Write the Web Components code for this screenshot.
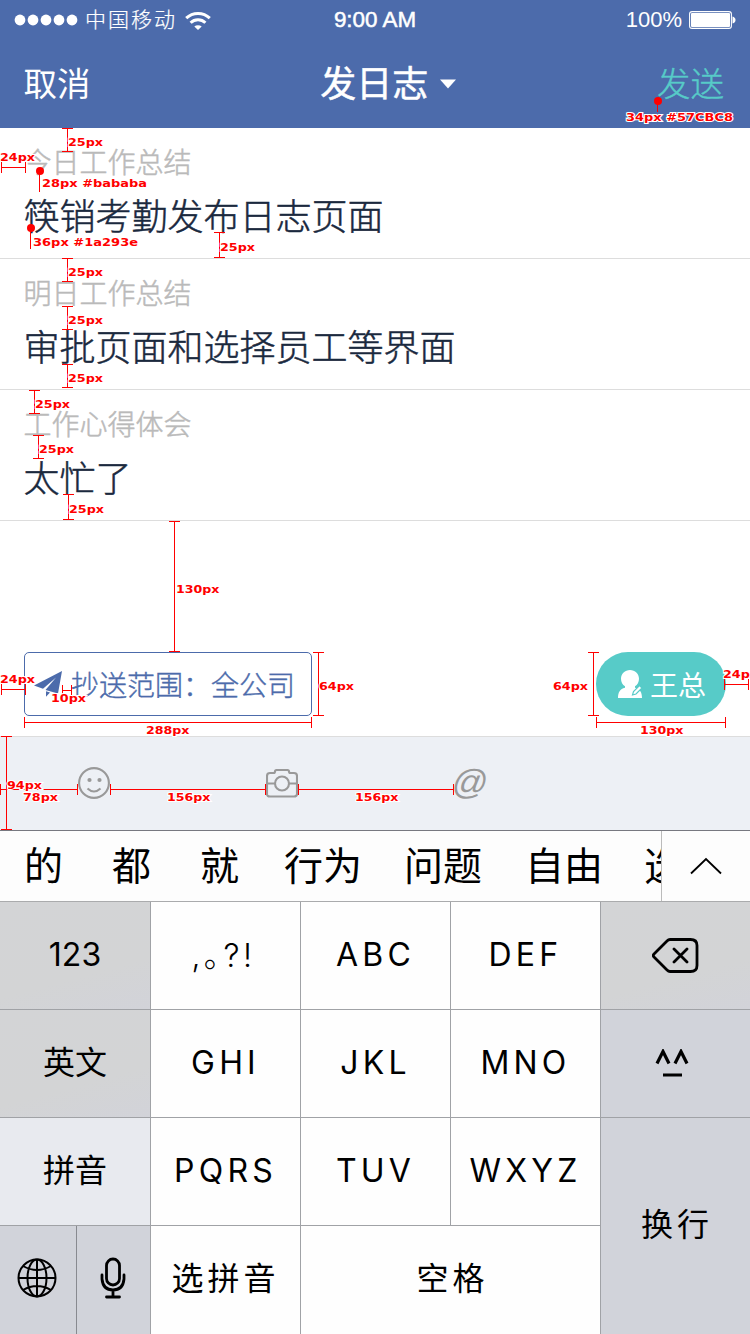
<!DOCTYPE html>
<html lang="zh-CN">
<head>
<meta charset="utf-8">
<title>发日志</title>
<style>
html,body{margin:0;padding:0}
body{width:750px;height:1334px;overflow:hidden;background:#fff;font-family:"Noto Sans CJK SC","Liberation Sans",sans-serif}
</style>
</head>
<body>
<log-screen></log-screen>
<script>
function define(name, html, init) {
  const tpl = document.createElement('template');
  tpl.innerHTML = html;
  customElements.define(name, class extends HTMLElement {
    constructor() {
      super();
      this.attachShadow({ mode: 'open' }).appendChild(tpl.content.cloneNode(true));
    }
    connectedCallback() { if (init) init(this, this.shadowRoot); }
  });
}

define('status-bar', `
<style>
:host{display:grid;grid-template-columns:1fr auto 1fr;align-items:center;height:40px;padding:0 14px 0 14px;color:#fff;font-size:21px;line-height:40px}
.l,.r{display:flex;align-items:center}
.r{justify-content:flex-end;gap:7px;font:22px/40px "Liberation Sans",sans-serif}
.c{font:22.400px/40px "Liberation Sans",sans-serif;-webkit-text-stroke:.5px #fff}
.n{margin:0 8px 0 6px;font-weight:300;letter-spacing:2px;line-height:36px;padding-bottom:4px;-webkit-text-stroke:.2px #fff}
svg{display:block}
</style>
<div class="l">
<svg width="65" height="12" fill="#fff"><circle cx="6" cy="6" r="5.400"/><circle cx="19" cy="6" r="5.400"/><circle cx="32" cy="6" r="5.400"/><circle cx="45" cy="6" r="5.400"/><circle cx="58" cy="6" r="5.400"/></svg>
<span class="n">中国移动</span>
<svg width="26" height="19" viewBox="0 0 26 19" fill="none" stroke="#fff" stroke-width="3"><path d="M1.200 7.200a17 17 0 0 1 23.600 0M5.600 11.800a10.600 10.600 0 0 1 14.800 0"/><path d="M9.300 15.600a5.500 5.500 0 0 1 7.400 0L13 19z" fill="#fff" stroke="none"/></svg>
</div>
<div class="c">9:00 AM</div>
<div class="r"><span>100%</span>
<svg width="47" height="18" fill="#fff"><rect x=".6" y=".6" width="41.800" height="16.800" rx="2.500" fill="none" stroke="#fff" stroke-width="1.100"/><rect x="2" y="2" width="39" height="14" rx="1"/><path d="M43.500 5.500q3 1 3 3.500t-3 3.500z"/></svg></div>`);

define('nav-bar', `
<style>
:host{display:grid;grid-template-columns:1fr auto 1fr;align-items:center;height:88px;padding:0 26px 0 23.500px;color:#fff;font-size:33.500px;line-height:84px}
span{padding-bottom:4px}
.t{display:flex;align-items:center;gap:12px;font-size:36px;font-weight:400;padding-left:29px;-webkit-text-stroke:.5px #fff}
.t span{padding-bottom:6px;line-height:82px}
.s{text-align:right;color:#57cbc8;font-weight:300;-webkit-text-stroke:.4px #57cbc8}
.x{font-weight:400}
</style>
<span class="x">取消</span>
<div class="t"><span>发日志</span><svg width="16" height="10"><path d="M0 .5h16l-8 9z" fill="#fff"/></svg></div>
<span class="s">发送</span>`);

define('log-entry', `
<style>
:host{display:flex;flex-direction:column;gap:21px;box-sizing:border-box;height:131px;padding:19px 24px 0 23.500px;border-bottom:1px solid #ddd}
.a{font-size:28px;line-height:28px;color:#bababa;font-weight:300;-webkit-text-stroke:.5px #bababa}
.b{font-size:36px;line-height:36px;color:#1a293e;font-weight:300;-webkit-text-stroke:.5px #1a293e}
</style>
<div class="a"><slot name="label"></slot></div><div class="b"><slot></slot></div>`);

define('scope-row', `
<style>
:host{display:flex;justify-content:space-between;padding:131px 24px 20px}
.p{display:flex;align-items:center;box-sizing:border-box;width:288px;height:64px;border:1px solid #4c6bab;border-radius:5px;padding-left:9px;gap:9px;color:#4c6bab;font-size:28px;font-weight:300;-webkit-text-stroke:.4px #4c6bab}
.w{display:flex;align-items:center;box-sizing:border-box;width:130px;height:64px;border-radius:32px;background:#57cbc8;color:#fff;padding-left:21px;gap:7px;font-size:28px}
svg{flex:none}span{white-space:nowrap;line-height:60px}
</style>
<div class="p"><svg width="28" height="26" viewBox="0 0 28 26" fill="#4c6bab" stroke="none"><path d="M28 0L0 14.500 9 17.800 22 6.500 11.500 19 24 22.500zM12 20.200v5.500l4-4.300z"/></svg><span>抄送范围：全公司</span></div>
<div class="w"><svg width="26" height="28" viewBox="0 0 26 28"><path d="M13 0c5 0 9 3.800 9 8.700 0 3.300-1.500 6-4 7.500v1.500c5 1.300 7 4.500 7 10.300H1c0-5.800 2-9 7-10.300v-1.500c-2.500-1.500-4-4.200-4-7.500C4 3.800 8 0 13 0z" fill="#fff"/><path d="M15.500 25l1-3.500 6-6 2.500 2.500-6 6z" fill="#fff" stroke="#57cbc8" stroke-width="1.200"/></svg><span>王总</span></div>`);

define('tool-bar', `
<style>
:host{display:flex;gap:156px;align-items:flex-start;box-sizing:border-box;height:94px;padding:30px 0 0 78px;background:#edf0f5;border-top:1px solid #ddd}
svg{display:block;fill:none;stroke:#999;stroke-width:2.100}
.at{font:italic 35px/30px "Liberation Sans",sans-serif;color:#999;margin-left:-2px;transform:skewX(-10deg)}
</style>
<svg width="32" height="32"><circle cx="16" cy="16" r="14.900"/><path d="M9.500 21.500q6.500 6 13 0"/><circle cx="11.500" cy="13" r="2.100" fill="#999" stroke="none"/><circle cx="21.500" cy="13" r="2.100" fill="#999" stroke="none"/></svg>
<svg width="32" height="32"><path d="M4 6h3.500q1.500 0 1.500-1.500t1.500-1.500h11q1.500 0 1.500 1.500t1.500 1.500H28q3 0 3 3v18q0 2.500-3 2.500H4q-3 0-3-2.500V9q0-3 3-3zM1 16.500h8M23 16.500h8"/><circle cx="16" cy="16.500" r="7"/></svg>
<div class="at">@</div>`);

define('candidate-bar', `
<style>
:host{display:grid;grid-template-columns:662px 1fr;height:70px;background:#fdfdfd;border-top:1px solid #777880;border-bottom:1px solid #aaabad}
.c{display:grid;grid-template-columns:88px 88px 84px 120px 121px 119px 60px;padding-left:24px;overflow:hidden;white-space:nowrap;font-size:39px;line-height:64px;color:#000;border-right:1px solid #bbb}
.m{display:grid;place-items:center}
</style>
<div class="c"><span>的</span><span>都</span><span>就</span><span>行为</span><span>问题</span><span>自由</span><span>选</span></div>
<div class="m"><svg width="32" height="18" fill="none" stroke="#000" stroke-width="1.800"><path d="M1 16.500L16 2l15 14.500"/></svg></div>`);

define('key-cap', `
<style>
:host{display:flex;align-items:center;justify-content:center;background:#fefefe;color:#000;font:32px/1 Inter,"Noto Sans CJK SC",sans-serif;white-space:nowrap}
:host([fn]){background:#d1d3da}
:host([warm]){background:linear-gradient(165deg,#d3d4d6,#d3d4d5 65%,#d2d3d9)}
:host([lit]){background:#e8eaef}
</style><slot></slot>`);

define('key-board', `
<style>
:host{display:grid;grid-template-columns:150px repeat(4,149px);grid-template-rows:107px 107px 107px 108px;gap:1px;background:#a0a2a6}
.w{letter-spacing:4.200px;padding-bottom:1px}
.cn{letter-spacing:4px;padding-bottom:2px}
.up{padding-bottom:2px}
.tall{grid-column:5;grid-row:3/5;text-indent:3px}
.space{grid-column:3/5;text-indent:4px}
.punct{letter-spacing:3.500px;font-weight:300;padding-right:4px}
.duo{display:grid;grid-template-columns:76px 73px;gap:1px;background:#888a90}
svg{display:block;fill:none;stroke:#000}
</style>
<key-cap fn warm class="up">123</key-cap><key-cap class="punct">,｡?!</key-cap><key-cap class="w">ABC</key-cap><key-cap class="w">DEF</key-cap>
<key-cap fn warm><svg width="48" height="36" stroke-width="2.800" stroke-linejoin="round" stroke-linecap="round"><path d="M18 1.500h20.500q6.500 0 6.500 6v20q0 6-6.500 6H18q-1.500 0-3-1.500L2 19q-1.500-1.500 0-3L15 3Q16.500 1.500 18 1.500zM22 11l13 13M35 11l-13 13"/></svg></key-cap>
<key-cap fn warm class="up">英文</key-cap><key-cap class="w">GHI</key-cap><key-cap class="w">JKL</key-cap><key-cap class="w">MNO</key-cap>
<key-cap fn><svg width="48" height="30" stroke-width="3.200"><path d="M5 14.500L11 2.500 17 14.500M23 14.500L29 2.500 35 14.500M11 26h19"/></svg></key-cap>
<key-cap fn lit class="up">拼音</key-cap><key-cap class="w">PQRS</key-cap><key-cap class="w">TUV</key-cap><key-cap class="w">WXYZ</key-cap>
<key-cap fn class="cn tall">换行</key-cap>
<div class="duo"><key-cap fn style="padding:0 2px 5px 0"><svg width="40" height="40" stroke-width="2"><circle cx="20" cy="20" r="18.500"/><ellipse cx="20" cy="20" rx="9.500" ry="18.500"/><path d="M20 1v38M1 20h38M6 8q14 8 28 0M6 32q14-8 28 0"/></svg></key-cap>
<key-cap fn style="padding:0 2px 4px 0"><svg width="26" height="42" stroke-width="2.800" stroke-linecap="round"><rect x="6.500" y="2" width="13" height="26" rx="6.500"/><path d="M2 18v4q1 11 11 11t11-11v-4M13 33v7M6.500 40h13"/></svg></key-cap></div>
<key-cap class="cn">选拼音</key-cap><key-cap class="cn space">空格</key-cap>`);

/* Redline layer: v = vertical measure, h = horizontal measure, d = pin with a style note. */
define('spec-overlay', `
<style>
:host{position:absolute;left:0;top:0;pointer-events:none}
svg{display:block}
path{stroke:#f00;fill:none;shape-rendering:crispEdges}
circle{fill:#f00}
text{font:bold 11px "DejaVu Sans",sans-serif;fill:#f00;stroke:#fff;stroke-width:2px;paint-order:stroke}
</style><svg width="750" height="1334"></svg>`, (el, root) => {
  const marks = [
    ['v',67,128,151,'25px',68,146],['h',167,1,25,'24px',0,161],
    ['d',40,171,192,'28px #bababa',42,187],['d',31,228,249,'36px #1a293e',33,246],
    ['v',219,232,257,'25px',220,251],['v',67,258,281,'25px',68,276],
    ['v',67,306,329,'25px',68,324],['v',67,364,387,'25px',68,382],
    ['v',34,390,413,'25px',35,408],['v',38,435,458,'25px',39,453],
    ['v',68,494,519,'25px',69,513],['v',174,521,651,'130px',176,593],
    ['h',689,1,25,'24px',0,683],['h',690,62,71,'10px',51,702],
    ['h',722,24,311,'288px',146,734],['v',318,652,715,'64px',319,690],
    ['v',593,652,715,'64px',553,690],['h',722,596,725,'130px',640,734],
    ['h',684,724,748,'24px',723,678],['v',6,736,829,'94px',7,789],
    ['h',789,0,77,'78px',23,801],['h',789,110,265,'156px',167,801],
    ['h',789,298,453,'156px',355,801],['d',658,101,112,'34px #57CBC8',626,121]];
  let lines = '', texts = '';
  for (const [k, p, a, b, t, x, y] of marks) {
    if (k === 'v') lines += `<path d="M${p+.5} ${a}V${b+1}M${p-5} ${a+.5}h11M${p-5} ${b+.5}h11"/>`;
    else if (k === 'h') lines += `<path d="M${a} ${p+.5}H${b+1}M${a+.5} ${p-5}v11M${b+.5} ${p-5}v11"/>`;
    else lines += `<path d="M${p-.5} ${a}V${b}"/><circle cx="${p}" cy="${a}" r="4"/>`;
    const w = t.length === 12 ? (t.endsWith('C8') ? 107 : 105) : t.length === 5 ? 43.5 : 35;
    texts += `<text x="${x}" y="${y-.5}" textLength="${w}" lengthAdjust="spacingAndGlyphs">${t}</text>`;
  }
  root.querySelector('svg').innerHTML = lines + texts;
});

define('log-screen', `
<style>
:host{display:block;position:relative;width:750px;height:1334px;overflow:hidden;background:#fff}
header{background:#4c6bab;height:128px}
</style>
<header><status-bar></status-bar><nav-bar></nav-bar></header>
<log-entry><span slot="label">今日工作总结</span>筷销考勤发布日志页面</log-entry>
<log-entry><span slot="label">明日工作总结</span>审批页面和选择员工等界面</log-entry>
<log-entry><span slot="label">工作心得体会</span>太忙了</log-entry>
<scope-row></scope-row>
<tool-bar></tool-bar>
<candidate-bar></candidate-bar>
<key-board></key-board>
<spec-overlay></spec-overlay>`);
</script>
</body>
</html>
